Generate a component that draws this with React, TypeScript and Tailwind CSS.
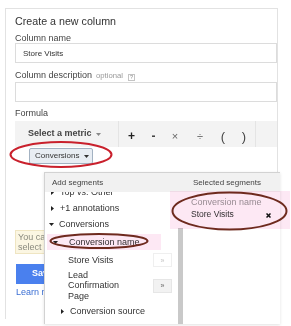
const TriRight = () => (
  <svg width="3" height="5" viewBox="0 0 3 5" className="shrink-0">
    <path d="M0 0 L3 2.5 L0 5 Z" fill="#222" />
  </svg>
);

const TriDown = ({ color = '#222' }: { color?: string }) => (
  <svg width="5" height="3" viewBox="0 0 5 3" className="shrink-0">
    <path d="M0 0 H5 L2.5 3 Z" fill={color} />
  </svg>
);

const operators = [
  { ch: '+', w: 'w-[25px]', cls: 'text-[12px] text-[#222] font-bold' },
  { ch: '-', w: 'w-[19px]', cls: 'text-[12px] text-[#444] font-bold' },
  { ch: '×', w: 'w-[24px]', cls: 'text-[11px] text-[#666]' },
  { ch: '÷', w: 'w-[26px]', cls: 'text-[11px] text-[#777]' },
  { ch: '(', w: 'w-[20px]', cls: 'text-[13px] text-[#444]' },
  { ch: ')', w: 'w-[22px]', cls: 'text-[13px] text-[#444]' },
];

export default function App() {
  return (
    <div className="relative w-[291px] h-[326px] overflow-hidden bg-white font-['Liberation_Sans',Arial,sans-serif] text-[#444]">
      {/* Main panel */}
      <div className="ml-[5px] mt-[8px] w-[273px] h-[311px] border-x border-t border-[#e2e2e2] pl-[9px]">
        <div className="pt-[6px] text-[10.7px] leading-[12px] text-[#333]">Create a new column</div>
        <div className="mt-[6px] text-[9px] leading-[10px]">Column name</div>
        <div className="h-[20px] border border-[#dcdcdc] flex items-center pl-[7px] pt-[1px] text-[8px] leading-[9px] text-[#333]">
          Store Visits
        </div>
        <div className="mt-[7px] text-[9px] leading-[10px] whitespace-nowrap">
          <span>Column description</span>
          <span className="ml-[4px] text-[7.7px] text-[#999]">optional</span>
          <span className="ml-[5px] inline-flex w-[7px] h-[7px] items-center justify-center border border-[#c4c4c4] text-[5.5px] leading-none text-[#888] align-[-0.5px]">
            ?
          </span>
        </div>
        <div className="mt-[1px] h-[20px] border border-[#dcdcdc]" />
        <div className="mt-[6px] text-[9px] leading-[10px]">Formula</div>

        {/* Formula toolbar */}
        <div className="mt-[3px] h-[26px] flex bg-[#f3f3f3]">
          <div className="w-[103px] flex items-center pl-[13px] text-[9px] font-bold text-[#444]">
            <span>Select a metric</span>
            <span className="ml-[4px]">
              <TriDown color="#888" />
            </span>
          </div>
          <div className="w-px bg-[#e4e4e4]" />
          <div className="flex pt-[4px]">
            {operators.map(op => (
              <div key={op.ch} className={`${op.w} flex items-center justify-center leading-none ${op.cls}`}>
                {op.ch}
              </div>
            ))}
          </div>
          <div className="w-px bg-[#e4e4e4]" />
        </div>

        <div className="mt-[1px] ml-[14px] w-[64px] h-[16px] flex items-center border border-[#a3b2c2] bg-[#e8edf3] rounded-[2px] pl-[5px] text-[8px] text-[#333]">
          <span>Conversions</span>
          <span className="ml-[5px]">
            <TriDown color="#333" />
          </span>
        </div>

        <div className="mt-[66px] h-[24px] bg-[#fbf6e2] border border-[#efe5c2] pl-[2px] pt-[2px] text-[9px] leading-[9.5px] text-[#8a8a7e]">
          <div>You can segment this metric by conversion.</div>
          <div>select a segment to add it to the formula.</div>
        </div>

        <div className="mt-[10px] ml-[1px] w-[60px] h-[20px] flex items-center bg-[#4a80ee] pl-[16px] text-[9px] font-bold text-white">
          Save
        </div>
        <div className="mt-[3px] ml-[1px] text-[9px] leading-[10px] text-[#3b6fd4]">Learn more</div>
      </div>

      {/* Segments dropdown */}
      <div className="absolute left-[44px] top-[172px] w-[236px] h-[152px] bg-white border-l border-t border-[#d2d2d2] shadow-[0_1px_3px_rgba(0,0,0,0.12)] flex flex-col">
        <div className="h-[19px] flex bg-[#f1f1f1] pt-[5px] text-[8px] leading-[10px] text-[#444]">
          <div className="w-[140px] pl-[7px]">Add segments</div>
          <div className="pl-[8px]">Selected segments</div>
        </div>
        <div className="flex-1 flex">
          <div className="w-[140px] flex">
            <div className="w-[133px] overflow-hidden text-[9px] text-[#333]">
              <div className="-mt-[8px]">
                <div className="h-[16px] leading-[16px] flex items-center pl-[6px] gap-[6px]">
                  <TriRight />
                  <span>Top vs. Other</span>
                </div>
                <div className="h-[16px] leading-[16px] flex items-center pl-[6px] gap-[6px]">
                  <TriRight />
                  <span>+1 annotations</span>
                </div>
                <div className="h-[17px] leading-[17px] flex items-center pl-[4px] gap-[5px]">
                  <TriDown />
                  <span>Conversions</span>
                </div>
                <div className="h-[18px] leading-[18px] flex items-center pl-[8px] gap-[11px]">
                  <TriDown />
                  <span>Conversion name</span>
                </div>
                <div className="h-[18px] leading-[18px] flex items-center justify-between pl-[23px] pr-[6px]">
                  <span>Store Visits</span>
                  <div className="w-[19px] h-[14px] flex items-center justify-center border border-[#efefef] text-[7px] leading-none text-[#c4c4c4]">
                    »
                  </div>
                </div>
                <div className="h-[33px] flex items-center justify-between pl-[23px] pr-[6px]">
                  <div className="leading-[10.5px]">
                    <div>Lead</div>
                    <div>Confirmation</div>
                    <div>Page</div>
                  </div>
                  <div className="w-[19px] h-[14px] flex items-center justify-center border border-[#e6e6e6] bg-[#f2f2f2] text-[7px] leading-none text-[#666]">
                    »
                  </div>
                </div>
                <div className="h-[18px] leading-[18px] flex items-center pl-[16px] gap-[6px]">
                  <TriRight />
                  <span>Conversion source</span>
                </div>
              </div>
            </div>
            <div className="w-[5px] flex flex-col">
              <div className="mt-[36px] flex-1 bg-[#c9c9c9]" />
            </div>
          </div>
          <div className="flex-1 pl-[6px] pt-[4px]">
            <div className="text-[9px] leading-[12px] text-[#9a9a9a]">Conversion name</div>
            <div className="h-[13px] flex items-center justify-between pr-[9px] text-[8.5px] leading-[13px] text-[#333]">
              <span>Store Visits</span>
              <svg width="5" height="5" viewBox="0 0 5 5" className="mt-[2px]">
                <path d="M0.5 0.5 L4.5 4.5 M4.5 0.5 L0.5 4.5" stroke="#111" strokeWidth="1.5" />
              </svg>
            </div>
          </div>
        </div>
      </div>

      {/* Annotation highlights */}
      <div className="absolute left-[170px] top-[191px] w-[120px] h-[38px] bg-[#fde8f4] mix-blend-multiply pointer-events-none" />
      <div className="absolute left-[47px] top-[234px] w-[114px] h-[16px] bg-[#fde8f4] mix-blend-multiply pointer-events-none" />
      <svg className="absolute inset-0 pointer-events-none" width="291" height="326" viewBox="0 0 291 326">
        <ellipse cx="61" cy="154.5" rx="50.5" ry="12.5" fill="none" stroke="#c9202c" strokeWidth="2" />
        <ellipse cx="99" cy="241" rx="48.5" ry="7" fill="none" stroke="#6e2a1e" strokeWidth="2" />
        <ellipse cx="229.5" cy="211" rx="57" ry="18.5" fill="none" stroke="#6e2a1e" strokeWidth="2" />
      </svg>
    </div>
  );
}
